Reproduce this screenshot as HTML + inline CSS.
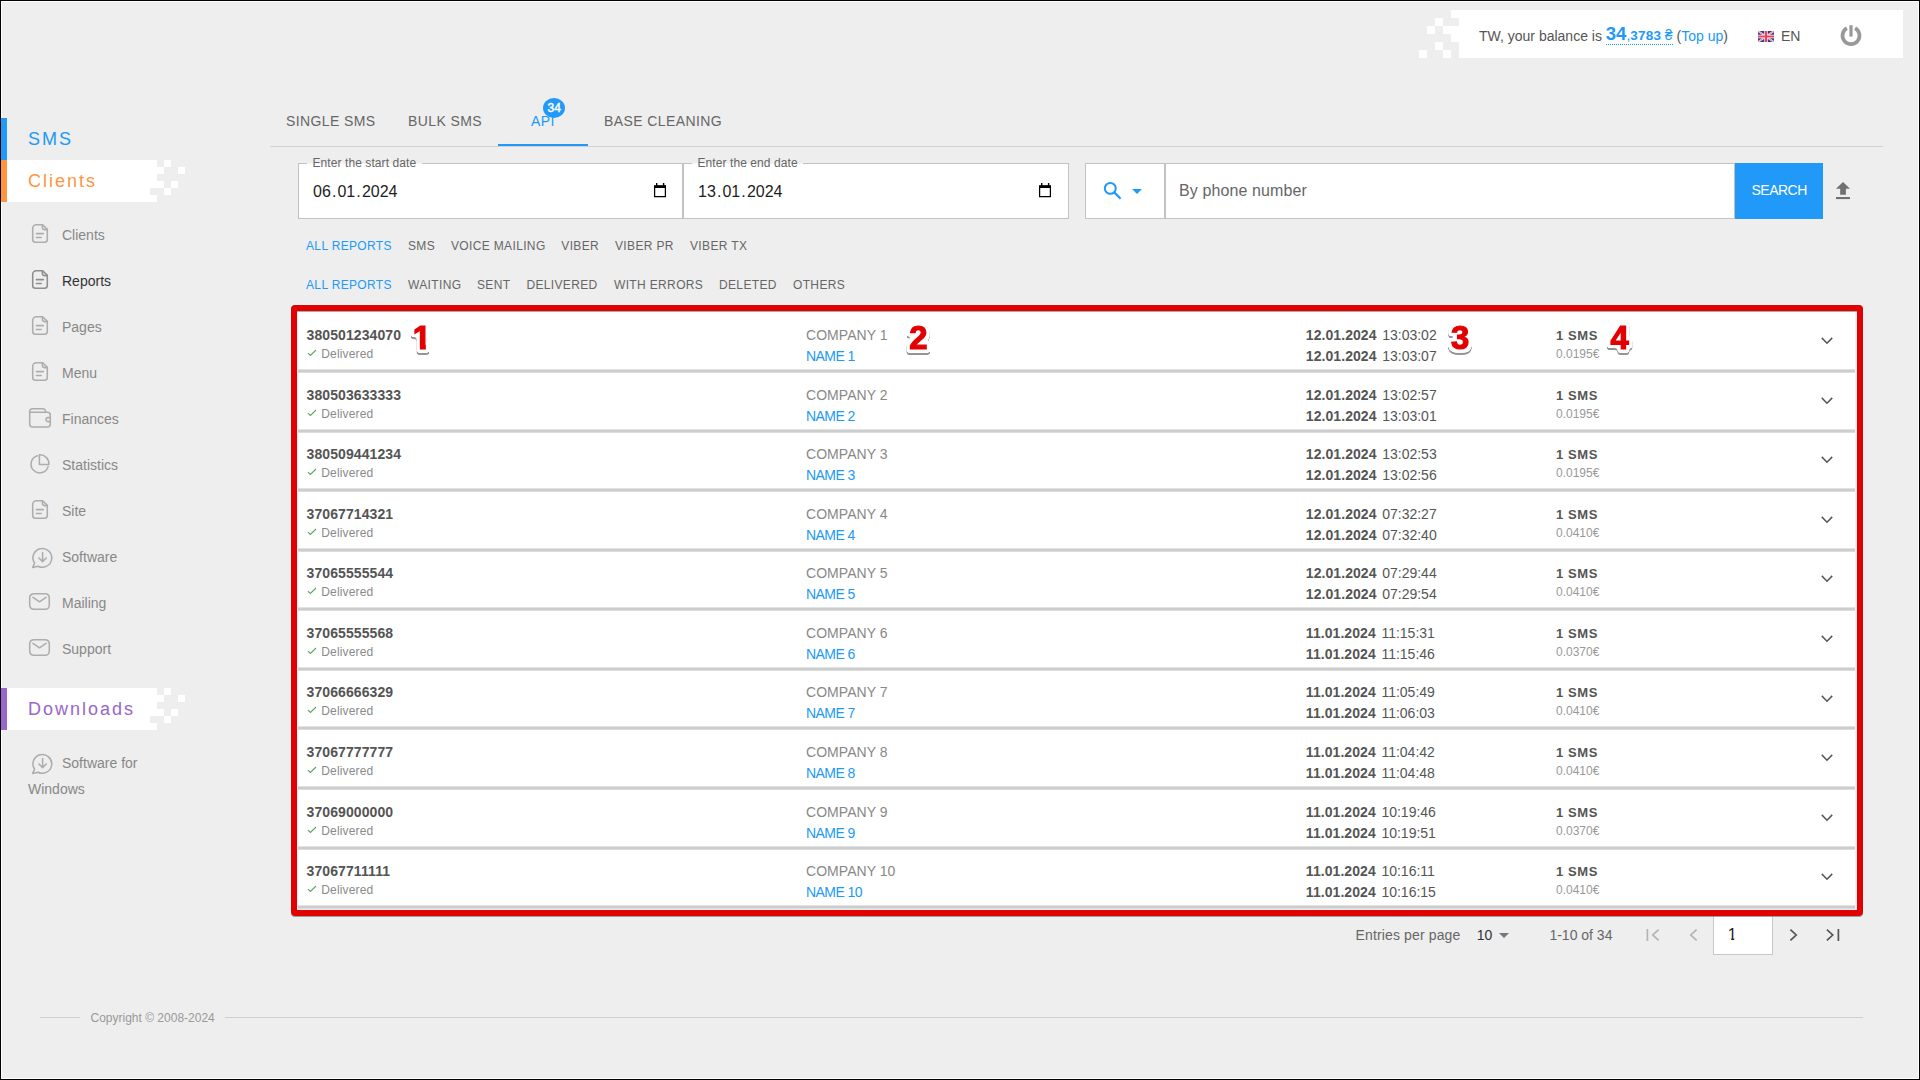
<!DOCTYPE html>
<html lang="en"><head><meta charset="utf-8"><title>Reports</title>
<style>
html,body{margin:0;padding:0}
body{width:1920px;height:1080px;overflow:hidden;position:relative;background:#eeeeee;font-family:"Liberation Sans",sans-serif;color:#666}
.t{position:absolute;white-space:nowrap;line-height:1}
.b{font-weight:bold}
.abs{position:absolute}
.w{position:absolute;background:#fff}
.g{position:absolute;background:#eeeeee}
svg{position:absolute;overflow:visible}
.frame{position:absolute;left:0;top:0;width:1918px;height:1078px;border:1px solid #000;box-shadow:inset 0 0 0 1px #fff;pointer-events:none}
.row{position:absolute;left:298px;width:1557px;background:#fff}
.sep{position:absolute;left:298px;width:1557px;height:4px;background:linear-gradient(#e2e2e2 0 25%,#cdcdcd 25% 75%,#dcdcdc 75%)}
.numw{position:absolute;filter:url(#ol)}
.num{display:block;white-space:nowrap;line-height:1;font-weight:bold;font-size:32.8px;color:#e30000;-webkit-text-stroke:1.2px #e30000}
.one{clip-path:polygon(-4px -4px,26px -4px,26px 23.4px,13.0px 23.4px,13.0px 32px,7.1px 32px,7.1px 23.4px,-4px 23.4px)}
</style></head><body>
<div class="frame"></div>

<div class="w" style="left:1459px;top:10px;width:444px;height:48px"></div>
<div class="w" style="left:1451px;top:10px;width:8px;height:8px"></div>
<div class="w" style="left:1435px;top:18px;width:8px;height:8px"></div>
<div class="w" style="left:1427px;top:26px;width:8px;height:8px"></div>
<div class="w" style="left:1443px;top:26px;width:8px;height:8px"></div>
<div class="w" style="left:1419px;top:50px;width:8px;height:8px"></div>
<div class="w" style="left:1443px;top:50px;width:8px;height:8px"></div>
<div class="w" style="left:1435px;top:42px;width:8px;height:8px"></div>
<div class="w" style="left:1451px;top:10px;width:8px;height:8px"></div>
<div class="w" style="left:1451px;top:26px;width:8px;height:8px"></div>
<div class="w" style="left:1451px;top:34px;width:8px;height:8px"></div>
<span class="t" style="left:1479px;top:28.15px;font-size:14px;color:#555;line-height:14px">TW, your balance is <span style="display:inline-block;position:relative;top:-1.5px;line-height:0;border-bottom:1px dotted #2099f8;padding-bottom:1.5px;margin-bottom:-1px;color:#2099f8"><b style="font-size:18.5px;line-height:14px">34</b><span style="font-size:14px;line-height:14px">,</span><b style="font-size:13.5px;line-height:14px;letter-spacing:.2px">3783</b><span style="font-size:14px;line-height:14px;margin-left:-.2px"> ₴</span></span> (<span style="color:#2099f8">Top up</span>)</span>
<svg style="left:1758px;top:31.4px;overflow:hidden" width="16" height="11" viewBox="0 0 60 40" preserveAspectRatio="none"><rect width="60" height="40" fill="#2e3f92"/><path d="M0 0L60 40M60 0L0 40" stroke="#fff" stroke-width="6.5"/><path d="M0 0L60 40M60 0L0 40" stroke="#ee4058" stroke-width="2.4"/><path d="M30 0V40M0 20H60" stroke="#fff" stroke-width="13"/><path d="M30 0V40M0 20H60" stroke="#ee4058" stroke-width="8"/></svg>
<span class="t" style="left:1781px;top:29.15px;font-size:14px;color:#555;">EN</span>
<svg style="left:1840px;top:24px" width="22" height="23" viewBox="0 0 22 23"><path d="M6.9 4.2A8.5 8.5 0 1 0 15.1 4.2" fill="none" stroke="#999" stroke-width="3.7" stroke-linecap="butt"/><path d="M11 1.2V12.6" stroke="#999" stroke-width="3.2" fill="none"/></svg>
<div class="abs" style="left:1px;top:118px;width:6px;height:42px;background:#2099f8"></div>
<span class="t" style="left:28px;top:129.76px;font-size:18px;color:#2099f8;letter-spacing:2px">SMS</span>
<div class="w" style="left:7px;top:160px;width:150px;height:42px"></div>
<div class="abs" style="left:1px;top:160px;width:6px;height:42px;background:#ff9540"></div>
<div class="w" style="left:164px;top:160px;width:7px;height:7px"></div>
<div class="w" style="left:157px;top:167px;width:7px;height:7px"></div>
<div class="w" style="left:178px;top:167px;width:7px;height:7px"></div>
<div class="w" style="left:157px;top:181px;width:7px;height:7px"></div>
<div class="w" style="left:171px;top:181px;width:7px;height:7px"></div>
<div class="w" style="left:164px;top:188px;width:7px;height:7px"></div>
<div class="g" style="left:150px;top:188px;width:7px;height:7px"></div>
<span class="t" style="left:28px;top:171.76px;font-size:18px;color:#ff9540;letter-spacing:2px">Clients</span>
<div class="w" style="left:7px;top:688px;width:150px;height:42px"></div>
<div class="abs" style="left:1px;top:688px;width:6px;height:42px;background:#9966cc"></div>
<div class="w" style="left:164px;top:688px;width:7px;height:7px"></div>
<div class="w" style="left:157px;top:695px;width:7px;height:7px"></div>
<div class="w" style="left:178px;top:695px;width:7px;height:7px"></div>
<div class="w" style="left:157px;top:709px;width:7px;height:7px"></div>
<div class="w" style="left:171px;top:709px;width:7px;height:7px"></div>
<div class="w" style="left:164px;top:716px;width:7px;height:7px"></div>
<div class="g" style="left:150px;top:716px;width:7px;height:7px"></div>
<span class="t" style="left:28px;top:699.76px;font-size:18px;color:#9966cc;letter-spacing:2px">Downloads</span>
<svg style="left:32px;top:223.7px" width="16" height="19" viewBox="0 0 16 19" fill="none" stroke="#adadad" stroke-width="1.55" stroke-linejoin="round" stroke-linecap="round"><path d="M4.2 .7H10.6L15.3 5.4V15.5A2.8 2.8 0 0 1 12.5 18.3H3.5A2.8 2.8 0 0 1 .7 15.5V4.2A3.5 3.5 0 0 1 4.2 .7Z"/><path d="M10.4 .9V3.6A2 2 0 0 0 12.4 5.6H15.1"/><path d="M4.4 9.6H11.4M4.4 13.4H9.2"/></svg>
<span class="t" style="left:62px;top:228.15px;font-size:14px;color:#888;">Clients</span>
<svg style="left:32px;top:269.7px" width="16" height="19" viewBox="0 0 16 19" fill="none" stroke="#8e8e8e" stroke-width="1.55" stroke-linejoin="round" stroke-linecap="round"><path d="M4.2 .7H10.6L15.3 5.4V15.5A2.8 2.8 0 0 1 12.5 18.3H3.5A2.8 2.8 0 0 1 .7 15.5V4.2A3.5 3.5 0 0 1 4.2 .7Z"/><path d="M10.4 .9V3.6A2 2 0 0 0 12.4 5.6H15.1"/><path d="M4.4 9.6H11.4M4.4 13.4H9.2"/></svg>
<span class="t" style="left:62px;top:274.15px;font-size:14px;color:#333;">Reports</span>
<svg style="left:32px;top:315.7px" width="16" height="19" viewBox="0 0 16 19" fill="none" stroke="#adadad" stroke-width="1.55" stroke-linejoin="round" stroke-linecap="round"><path d="M4.2 .7H10.6L15.3 5.4V15.5A2.8 2.8 0 0 1 12.5 18.3H3.5A2.8 2.8 0 0 1 .7 15.5V4.2A3.5 3.5 0 0 1 4.2 .7Z"/><path d="M10.4 .9V3.6A2 2 0 0 0 12.4 5.6H15.1"/><path d="M4.4 9.6H11.4M4.4 13.4H9.2"/></svg>
<span class="t" style="left:62px;top:320.15px;font-size:14px;color:#888;">Pages</span>
<svg style="left:32px;top:361.7px" width="16" height="19" viewBox="0 0 16 19" fill="none" stroke="#adadad" stroke-width="1.55" stroke-linejoin="round" stroke-linecap="round"><path d="M4.2 .7H10.6L15.3 5.4V15.5A2.8 2.8 0 0 1 12.5 18.3H3.5A2.8 2.8 0 0 1 .7 15.5V4.2A3.5 3.5 0 0 1 4.2 .7Z"/><path d="M10.4 .9V3.6A2 2 0 0 0 12.4 5.6H15.1"/><path d="M4.4 9.6H11.4M4.4 13.4H9.2"/></svg>
<span class="t" style="left:62px;top:366.15px;font-size:14px;color:#888;">Menu</span>
<svg style="left:28.7px;top:408px" width="22" height="20" viewBox="0 0 22 20" fill="none" stroke="#adadad" stroke-width="1.55" stroke-linejoin="round" stroke-linecap="round"><path d="M.7 4.2V16A3 3 0 0 0 3.7 19H18.3A3 3 0 0 0 21.3 16V7.2A3 3 0 0 0 18.3 4.2H.7"/><path d="M.7 4.2V3.2A2.5 2.5 0 0 1 3.2 .7H14A2.5 2.5 0 0 1 16.5 3.2V4.2"/><path d="M21.3 9.6H19A2 2 0 0 0 19 13.6H21.3"/></svg>
<span class="t" style="left:62px;top:412.15px;font-size:14px;color:#888;">Finances</span>
<svg style="left:30px;top:453.8px" width="20" height="21" viewBox="0 0 20 21" fill="none" stroke="#adadad" stroke-width="1.55" stroke-linejoin="round" stroke-linecap="round"><path d="M9.4 1.2V10.4H18.6"/><path d="M7.4 1.8A8.7 8.7 0 1 0 18.1 12.6"/><path d="M9.4 .8A9 9 0 0 1 18.9 10.2"/></svg>
<span class="t" style="left:62px;top:458.15px;font-size:14px;color:#888;">Statistics</span>
<svg style="left:32px;top:499.7px" width="16" height="19" viewBox="0 0 16 19" fill="none" stroke="#adadad" stroke-width="1.55" stroke-linejoin="round" stroke-linecap="round"><path d="M4.2 .7H10.6L15.3 5.4V15.5A2.8 2.8 0 0 1 12.5 18.3H3.5A2.8 2.8 0 0 1 .7 15.5V4.2A3.5 3.5 0 0 1 4.2 .7Z"/><path d="M10.4 .9V3.6A2 2 0 0 0 12.4 5.6H15.1"/><path d="M4.4 9.6H11.4M4.4 13.4H9.2"/></svg>
<span class="t" style="left:62px;top:504.15px;font-size:14px;color:#888;">Site</span>
<svg style="left:31.5px;top:547px" width="21" height="21" viewBox="0 0 21 21" fill="none" stroke="#adadad" stroke-width="1.55" stroke-linejoin="round" stroke-linecap="round"><path d="M2.6 16.2A9.4 9.4 0 1 1 6 19.2L.7 20.4Z"/><path d="M10.6 5.5V14.5M6.9 11L10.6 14.6L14.3 11"/></svg>
<span class="t" style="left:62px;top:550.15px;font-size:14px;color:#888;">Software</span>
<svg style="left:29.0px;top:592.9px" width="21" height="17" viewBox="0 0 21 17" fill="none" stroke="#adadad" stroke-width="1.55" stroke-linejoin="round" stroke-linecap="round"><path d="M4.7 .7H16.3A4 4 0 0 1 20.3 4.7V12.3A4 4 0 0 1 16.3 16.3H4.7A4 4 0 0 1 .7 12.3V4.7A4 4 0 0 1 4.7 .7Z"/><path d="M4 4.3L10.5 8.8L17 4.3"/></svg>
<span class="t" style="left:62px;top:596.15px;font-size:14px;color:#888;">Mailing</span>
<svg style="left:29.0px;top:638.9px" width="21" height="17" viewBox="0 0 21 17" fill="none" stroke="#adadad" stroke-width="1.55" stroke-linejoin="round" stroke-linecap="round"><path d="M4.7 .7H16.3A4 4 0 0 1 20.3 4.7V12.3A4 4 0 0 1 16.3 16.3H4.7A4 4 0 0 1 .7 12.3V4.7A4 4 0 0 1 4.7 .7Z"/><path d="M4 4.3L10.5 8.8L17 4.3"/></svg>
<span class="t" style="left:62px;top:642.15px;font-size:14px;color:#888;">Support</span>
<svg style="left:31.5px;top:752.6px" width="21" height="21" viewBox="0 0 21 21" fill="none" stroke="#adadad" stroke-width="1.55" stroke-linejoin="round" stroke-linecap="round"><path d="M2.6 16.2A9.4 9.4 0 1 1 6 19.2L.7 20.4Z"/><path d="M10.6 5.5V14.5M6.9 11L10.6 14.6L14.3 11"/></svg>
<span class="t" style="left:62px;top:756.15px;font-size:14px;color:#888;">Software for</span>
<span class="t" style="left:28px;top:782.15px;font-size:14px;color:#888;">Windows</span>
<div class="abs" style="left:270px;top:146px;width:1613px;height:1px;background:#d2d2d2"></div>
<div class="abs" style="left:498px;top:144px;width:90px;height:2px;background:#2099f8"></div>
<span class="t" style="left:286px;top:114.15px;font-size:14px;color:#666;letter-spacing:.4px">SINGLE SMS</span>
<span class="t" style="left:408px;top:114.15px;font-size:14px;color:#666;letter-spacing:.4px">BULK SMS</span>
<span class="t" style="left:531px;top:114.15px;font-size:14px;color:#2099f8;letter-spacing:.4px">API</span>
<span class="t" style="left:604px;top:114.15px;font-size:14px;color:#666;letter-spacing:.4px">BASE CLEANING</span>
<div class="abs" style="left:543px;top:97.7px;width:22.4px;height:20.4px;border-radius:11.2px/10.2px;background:#2099f8;color:#fff;font-size:12px;-webkit-text-stroke:.45px #fff;text-align:center;line-height:20.4px">34</div>
<div class="w" style="left:298px;top:163px;width:383px;height:54px;border:1px solid #c2c2c2"></div>
<div class="abs" style="left:307px;top:163px;width:115px;height:1px;background:linear-gradient(#f6f6f6,#f6f6f6)"></div>
<span class="t" style="left:312.5px;top:157.34px;font-size:12px;color:#666;letter-spacing:.08px">Enter the start date</span>
<span class="t" style="left:313px;top:184.26px;font-size:16px;color:#1d1d1d;">06<span style="margin:0 1.1px">.</span>01<span style="margin:0 1.1px">.</span>2024</span>
<svg style="left:652.5px;top:183px" width="13" height="14" viewBox="0 0 13 14"><path d="M1.6 3.2H12.4V13.7H1.6Z" fill="none" stroke="#000" stroke-width="1.25" stroke-linejoin="round"/><path d="M1 2.3H13V5H1Z" fill="#000"/><path d="M3.7 .1V3M10.6 .1V3" stroke="#000" stroke-width="1.4"/></svg>
<div class="w" style="left:683px;top:163px;width:384px;height:54px;border:1px solid #c2c2c2"></div>
<div class="abs" style="left:692px;top:163px;width:111px;height:1px;background:linear-gradient(#f6f6f6,#f6f6f6)"></div>
<span class="t" style="left:697.5px;top:157.34px;font-size:12px;color:#666;letter-spacing:.08px">Enter the end date</span>
<span class="t" style="left:698px;top:184.26px;font-size:16px;color:#1d1d1d;">13<span style="margin:0 1.1px">.</span>01<span style="margin:0 1.1px">.</span>2024</span>
<svg style="left:1037.5px;top:183px" width="13" height="14" viewBox="0 0 13 14"><path d="M1.6 3.2H12.4V13.7H1.6Z" fill="none" stroke="#000" stroke-width="1.25" stroke-linejoin="round"/><path d="M1 2.3H13V5H1Z" fill="#000"/><path d="M3.7 .1V3M10.6 .1V3" stroke="#000" stroke-width="1.4"/></svg>
<div class="w" style="left:1085px;top:163px;width:78px;height:54px;border:1px solid #c2c2c2"></div>
<div class="w" style="left:1165px;top:163px;width:568px;height:54px;border:1px solid #c2c2c2"></div>
<svg style="left:1102px;top:180px" width="22" height="22" viewBox="0 0 22 22"><circle cx="8.3" cy="8.4" r="5.45" fill="none" stroke="#2099f8" stroke-width="2"/><path d="M12.3 12.4L18.6 18.7" stroke="#2099f8" stroke-width="2.2" fill="none"/></svg>
<svg style="left:1131.5px;top:189px" width="10" height="5" viewBox="0 0 10 5"><path d="M0 0H10L5 5Z" fill="#2099f8"/></svg>
<span class="t" style="left:1179px;top:182.96px;font-size:16px;color:#666;letter-spacing:.1px">By phone number</span>
<div class="abs" style="left:1735px;top:163px;width:88px;height:56px;background:#2099f8"></div>
<span class="t" style="left:1751.5px;top:183.15px;font-size:14px;color:#fff;letter-spacing:-.5px">SEARCH</span>
<svg style="left:1836px;top:182px" width="14" height="17" viewBox="0 0 14 17"><path d="M7 -.1L14 6.8H9.9V12.8H4.2V6.8H0Z" fill="#707070"/><path d="M0 15H14V17.1H0Z" fill="#707070"/></svg>
<span class="t" style="left:306px;top:239.84px;font-size:12px;color:#2099f8;letter-spacing:.35px">ALL REPORTS</span>
<span class="t" style="left:408px;top:239.84px;font-size:12px;color:#666;letter-spacing:.35px">SMS</span>
<span class="t" style="left:451px;top:239.84px;font-size:12px;color:#666;letter-spacing:.35px">VOICE MAILING</span>
<span class="t" style="left:561.3px;top:239.84px;font-size:12px;color:#666;letter-spacing:.35px">VIBER</span>
<span class="t" style="left:615px;top:239.84px;font-size:12px;color:#666;letter-spacing:.35px">VIBER PR</span>
<span class="t" style="left:690px;top:239.84px;font-size:12px;color:#666;letter-spacing:.35px">VIBER TX</span>
<span class="t" style="left:306px;top:278.84px;font-size:12px;color:#2099f8;letter-spacing:.35px">ALL REPORTS</span>
<span class="t" style="left:408px;top:278.84px;font-size:12px;color:#666;letter-spacing:.35px">WAITING</span>
<span class="t" style="left:477px;top:278.84px;font-size:12px;color:#666;letter-spacing:.35px">SENT</span>
<span class="t" style="left:526.4px;top:278.84px;font-size:12px;color:#666;letter-spacing:.35px">DELIVERED</span>
<span class="t" style="left:614px;top:278.84px;font-size:12px;color:#666;letter-spacing:.35px">WITH ERRORS</span>
<span class="t" style="left:719px;top:278.84px;font-size:12px;color:#666;letter-spacing:.35px">DELETED</span>
<span class="t" style="left:793px;top:278.84px;font-size:12px;color:#666;letter-spacing:.35px">OTHERS</span>
<div class="w" style="left:297px;top:311px;width:1560px;height:599px;background:#f4f4f4"></div>
<div class="row" style="top:311px;height:58px"></div><div class="sep" style="top:369px"></div>
<span class="t b" style="left:306.5px;top:327.75px;font-size:14px;color:#545454;letter-spacing:.1px">380501234070</span>
<svg style="left:307px;top:348.5px" width="11" height="8" viewBox="0 0 11 8"><path d="M.9 4.1L3.4 6.5L9 1" fill="none" stroke="#5aa660" stroke-width="1.1"/></svg>
<span class="t" style="left:321.3px;top:347.64px;font-size:12px;color:#8a8a8a;letter-spacing:.15px">Delivered</span>
<span class="t" style="left:806px;top:327.95px;font-size:14px;color:#888;letter-spacing:.05px">COMPANY 1</span>
<span class="t" style="left:806px;top:349.15px;font-size:14px;color:#2099f8;letter-spacing:-.55px">NAME 1</span>
<span class="t" style="left:1305.8px;top:327.75px;font-size:14px;color:#555;"><b style="letter-spacing:.07px">12.01.2024</b><span style="margin-left:5.6px">13:03:02</span></span>
<span class="t" style="left:1305.8px;top:348.55px;font-size:14px;color:#555;"><b style="letter-spacing:.07px">12.01.2024</b><span style="margin-left:5.6px">13:03:07</span></span>
<span class="t b" style="left:1556px;top:328.60px;font-size:13px;color:#555;letter-spacing:.6px">1 SMS</span>
<span class="t" style="left:1556px;top:347.64px;font-size:12px;color:#999;">0.0195€</span>
<svg style="left:1821px;top:337.35px" width="12" height="8" viewBox="0 0 12 8"><path d="M.8 .9L6 6.2L11.2 .9" fill="none" stroke="#555" stroke-width="1.5"/></svg>
<div class="row" style="top:373px;height:56px"></div><div class="sep" style="top:429px"></div>
<span class="t b" style="left:306.5px;top:387.75px;font-size:14px;color:#545454;letter-spacing:.1px">380503633333</span>
<svg style="left:307px;top:408.5px" width="11" height="8" viewBox="0 0 11 8"><path d="M.9 4.1L3.4 6.5L9 1" fill="none" stroke="#5aa660" stroke-width="1.1"/></svg>
<span class="t" style="left:321.3px;top:407.64px;font-size:12px;color:#8a8a8a;letter-spacing:.15px">Delivered</span>
<span class="t" style="left:806px;top:387.95px;font-size:14px;color:#888;letter-spacing:.05px">COMPANY 2</span>
<span class="t" style="left:806px;top:409.15px;font-size:14px;color:#2099f8;letter-spacing:-.55px">NAME 2</span>
<span class="t" style="left:1305.8px;top:387.75px;font-size:14px;color:#555;"><b style="letter-spacing:.07px">12.01.2024</b><span style="margin-left:5.6px">13:02:57</span></span>
<span class="t" style="left:1305.8px;top:408.55px;font-size:14px;color:#555;"><b style="letter-spacing:.07px">12.01.2024</b><span style="margin-left:5.6px">13:03:01</span></span>
<span class="t b" style="left:1556px;top:388.60px;font-size:13px;color:#555;letter-spacing:.6px">1 SMS</span>
<span class="t" style="left:1556px;top:407.64px;font-size:12px;color:#999;">0.0195€</span>
<svg style="left:1821px;top:396.88px" width="12" height="8" viewBox="0 0 12 8"><path d="M.8 .9L6 6.2L11.2 .9" fill="none" stroke="#555" stroke-width="1.5"/></svg>
<div class="row" style="top:433px;height:55px"></div><div class="sep" style="top:488px"></div>
<span class="t b" style="left:306.5px;top:446.75px;font-size:14px;color:#545454;letter-spacing:.1px">380509441234</span>
<svg style="left:307px;top:467.5px" width="11" height="8" viewBox="0 0 11 8"><path d="M.9 4.1L3.4 6.5L9 1" fill="none" stroke="#5aa660" stroke-width="1.1"/></svg>
<span class="t" style="left:321.3px;top:466.64px;font-size:12px;color:#8a8a8a;letter-spacing:.15px">Delivered</span>
<span class="t" style="left:806px;top:446.95px;font-size:14px;color:#888;letter-spacing:.05px">COMPANY 3</span>
<span class="t" style="left:806px;top:468.15px;font-size:14px;color:#2099f8;letter-spacing:-.55px">NAME 3</span>
<span class="t" style="left:1305.8px;top:446.75px;font-size:14px;color:#555;"><b style="letter-spacing:.07px">12.01.2024</b><span style="margin-left:5.6px">13:02:53</span></span>
<span class="t" style="left:1305.8px;top:467.55px;font-size:14px;color:#555;"><b style="letter-spacing:.07px">12.01.2024</b><span style="margin-left:5.6px">13:02:56</span></span>
<span class="t b" style="left:1556px;top:447.60px;font-size:13px;color:#555;letter-spacing:.6px">1 SMS</span>
<span class="t" style="left:1556px;top:466.64px;font-size:12px;color:#999;">0.0195€</span>
<svg style="left:1821px;top:456.41px" width="12" height="8" viewBox="0 0 12 8"><path d="M.8 .9L6 6.2L11.2 .9" fill="none" stroke="#555" stroke-width="1.5"/></svg>
<div class="row" style="top:492px;height:56px"></div><div class="sep" style="top:548px"></div>
<span class="t b" style="left:306.5px;top:506.75px;font-size:14px;color:#545454;letter-spacing:.1px">37067714321</span>
<svg style="left:307px;top:527.5px" width="11" height="8" viewBox="0 0 11 8"><path d="M.9 4.1L3.4 6.5L9 1" fill="none" stroke="#5aa660" stroke-width="1.1"/></svg>
<span class="t" style="left:321.3px;top:526.64px;font-size:12px;color:#8a8a8a;letter-spacing:.15px">Delivered</span>
<span class="t" style="left:806px;top:506.95px;font-size:14px;color:#888;letter-spacing:.05px">COMPANY 4</span>
<span class="t" style="left:806px;top:528.15px;font-size:14px;color:#2099f8;letter-spacing:-.55px">NAME 4</span>
<span class="t" style="left:1305.8px;top:506.75px;font-size:14px;color:#555;"><b style="letter-spacing:.07px">12.01.2024</b><span style="margin-left:5.6px">07:32:27</span></span>
<span class="t" style="left:1305.8px;top:527.55px;font-size:14px;color:#555;"><b style="letter-spacing:.07px">12.01.2024</b><span style="margin-left:5.6px">07:32:40</span></span>
<span class="t b" style="left:1556px;top:507.60px;font-size:13px;color:#555;letter-spacing:.6px">1 SMS</span>
<span class="t" style="left:1556px;top:526.64px;font-size:12px;color:#999;">0.0410€</span>
<svg style="left:1821px;top:515.94px" width="12" height="8" viewBox="0 0 12 8"><path d="M.8 .9L6 6.2L11.2 .9" fill="none" stroke="#555" stroke-width="1.5"/></svg>
<div class="row" style="top:552px;height:55px"></div><div class="sep" style="top:607px"></div>
<span class="t b" style="left:306.5px;top:565.75px;font-size:14px;color:#545454;letter-spacing:.1px">37065555544</span>
<svg style="left:307px;top:586.5px" width="11" height="8" viewBox="0 0 11 8"><path d="M.9 4.1L3.4 6.5L9 1" fill="none" stroke="#5aa660" stroke-width="1.1"/></svg>
<span class="t" style="left:321.3px;top:585.64px;font-size:12px;color:#8a8a8a;letter-spacing:.15px">Delivered</span>
<span class="t" style="left:806px;top:565.95px;font-size:14px;color:#888;letter-spacing:.05px">COMPANY 5</span>
<span class="t" style="left:806px;top:587.15px;font-size:14px;color:#2099f8;letter-spacing:-.55px">NAME 5</span>
<span class="t" style="left:1305.8px;top:565.75px;font-size:14px;color:#555;"><b style="letter-spacing:.07px">12.01.2024</b><span style="margin-left:5.6px">07:29:44</span></span>
<span class="t" style="left:1305.8px;top:586.55px;font-size:14px;color:#555;"><b style="letter-spacing:.07px">12.01.2024</b><span style="margin-left:5.6px">07:29:54</span></span>
<span class="t b" style="left:1556px;top:566.60px;font-size:13px;color:#555;letter-spacing:.6px">1 SMS</span>
<span class="t" style="left:1556px;top:585.64px;font-size:12px;color:#999;">0.0410€</span>
<svg style="left:1821px;top:575.47px" width="12" height="8" viewBox="0 0 12 8"><path d="M.8 .9L6 6.2L11.2 .9" fill="none" stroke="#555" stroke-width="1.5"/></svg>
<div class="row" style="top:611px;height:56px"></div><div class="sep" style="top:667px"></div>
<span class="t b" style="left:306.5px;top:625.75px;font-size:14px;color:#545454;letter-spacing:.1px">37065555568</span>
<svg style="left:307px;top:646.5px" width="11" height="8" viewBox="0 0 11 8"><path d="M.9 4.1L3.4 6.5L9 1" fill="none" stroke="#5aa660" stroke-width="1.1"/></svg>
<span class="t" style="left:321.3px;top:645.64px;font-size:12px;color:#8a8a8a;letter-spacing:.15px">Delivered</span>
<span class="t" style="left:806px;top:625.95px;font-size:14px;color:#888;letter-spacing:.05px">COMPANY 6</span>
<span class="t" style="left:806px;top:647.15px;font-size:14px;color:#2099f8;letter-spacing:-.55px">NAME 6</span>
<span class="t" style="left:1305.8px;top:625.75px;font-size:14px;color:#555;"><b style="letter-spacing:.07px">11.01.2024</b><span style="margin-left:5.6px">11:15:31</span></span>
<span class="t" style="left:1305.8px;top:646.55px;font-size:14px;color:#555;"><b style="letter-spacing:.07px">11.01.2024</b><span style="margin-left:5.6px">11:15:46</span></span>
<span class="t b" style="left:1556px;top:626.60px;font-size:13px;color:#555;letter-spacing:.6px">1 SMS</span>
<span class="t" style="left:1556px;top:645.64px;font-size:12px;color:#999;">0.0370€</span>
<svg style="left:1821px;top:635.00px" width="12" height="8" viewBox="0 0 12 8"><path d="M.8 .9L6 6.2L11.2 .9" fill="none" stroke="#555" stroke-width="1.5"/></svg>
<div class="row" style="top:671px;height:55px"></div><div class="sep" style="top:726px"></div>
<span class="t b" style="left:306.5px;top:684.75px;font-size:14px;color:#545454;letter-spacing:.1px">37066666329</span>
<svg style="left:307px;top:705.5px" width="11" height="8" viewBox="0 0 11 8"><path d="M.9 4.1L3.4 6.5L9 1" fill="none" stroke="#5aa660" stroke-width="1.1"/></svg>
<span class="t" style="left:321.3px;top:704.64px;font-size:12px;color:#8a8a8a;letter-spacing:.15px">Delivered</span>
<span class="t" style="left:806px;top:684.95px;font-size:14px;color:#888;letter-spacing:.05px">COMPANY 7</span>
<span class="t" style="left:806px;top:706.15px;font-size:14px;color:#2099f8;letter-spacing:-.55px">NAME 7</span>
<span class="t" style="left:1305.8px;top:684.75px;font-size:14px;color:#555;"><b style="letter-spacing:.07px">11.01.2024</b><span style="margin-left:5.6px">11:05:49</span></span>
<span class="t" style="left:1305.8px;top:705.55px;font-size:14px;color:#555;"><b style="letter-spacing:.07px">11.01.2024</b><span style="margin-left:5.6px">11:06:03</span></span>
<span class="t b" style="left:1556px;top:685.60px;font-size:13px;color:#555;letter-spacing:.6px">1 SMS</span>
<span class="t" style="left:1556px;top:704.64px;font-size:12px;color:#999;">0.0410€</span>
<svg style="left:1821px;top:694.53px" width="12" height="8" viewBox="0 0 12 8"><path d="M.8 .9L6 6.2L11.2 .9" fill="none" stroke="#555" stroke-width="1.5"/></svg>
<div class="row" style="top:730px;height:56px"></div><div class="sep" style="top:786px"></div>
<span class="t b" style="left:306.5px;top:744.75px;font-size:14px;color:#545454;letter-spacing:.1px">37067777777</span>
<svg style="left:307px;top:765.5px" width="11" height="8" viewBox="0 0 11 8"><path d="M.9 4.1L3.4 6.5L9 1" fill="none" stroke="#5aa660" stroke-width="1.1"/></svg>
<span class="t" style="left:321.3px;top:764.64px;font-size:12px;color:#8a8a8a;letter-spacing:.15px">Delivered</span>
<span class="t" style="left:806px;top:744.95px;font-size:14px;color:#888;letter-spacing:.05px">COMPANY 8</span>
<span class="t" style="left:806px;top:766.15px;font-size:14px;color:#2099f8;letter-spacing:-.55px">NAME 8</span>
<span class="t" style="left:1305.8px;top:744.75px;font-size:14px;color:#555;"><b style="letter-spacing:.07px">11.01.2024</b><span style="margin-left:5.6px">11:04:42</span></span>
<span class="t" style="left:1305.8px;top:765.55px;font-size:14px;color:#555;"><b style="letter-spacing:.07px">11.01.2024</b><span style="margin-left:5.6px">11:04:48</span></span>
<span class="t b" style="left:1556px;top:745.60px;font-size:13px;color:#555;letter-spacing:.6px">1 SMS</span>
<span class="t" style="left:1556px;top:764.64px;font-size:12px;color:#999;">0.0410€</span>
<svg style="left:1821px;top:754.06px" width="12" height="8" viewBox="0 0 12 8"><path d="M.8 .9L6 6.2L11.2 .9" fill="none" stroke="#555" stroke-width="1.5"/></svg>
<div class="row" style="top:790px;height:56px"></div><div class="sep" style="top:846px"></div>
<span class="t b" style="left:306.5px;top:804.75px;font-size:14px;color:#545454;letter-spacing:.1px">37069000000</span>
<svg style="left:307px;top:825.5px" width="11" height="8" viewBox="0 0 11 8"><path d="M.9 4.1L3.4 6.5L9 1" fill="none" stroke="#5aa660" stroke-width="1.1"/></svg>
<span class="t" style="left:321.3px;top:824.64px;font-size:12px;color:#8a8a8a;letter-spacing:.15px">Delivered</span>
<span class="t" style="left:806px;top:804.95px;font-size:14px;color:#888;letter-spacing:.05px">COMPANY 9</span>
<span class="t" style="left:806px;top:826.15px;font-size:14px;color:#2099f8;letter-spacing:-.55px">NAME 9</span>
<span class="t" style="left:1305.8px;top:804.75px;font-size:14px;color:#555;"><b style="letter-spacing:.07px">11.01.2024</b><span style="margin-left:5.6px">10:19:46</span></span>
<span class="t" style="left:1305.8px;top:825.55px;font-size:14px;color:#555;"><b style="letter-spacing:.07px">11.01.2024</b><span style="margin-left:5.6px">10:19:51</span></span>
<span class="t b" style="left:1556px;top:805.60px;font-size:13px;color:#555;letter-spacing:.6px">1 SMS</span>
<span class="t" style="left:1556px;top:824.64px;font-size:12px;color:#999;">0.0370€</span>
<svg style="left:1821px;top:813.59px" width="12" height="8" viewBox="0 0 12 8"><path d="M.8 .9L6 6.2L11.2 .9" fill="none" stroke="#555" stroke-width="1.5"/></svg>
<div class="row" style="top:850px;height:55px"></div><div class="sep" style="top:905px"></div>
<span class="t b" style="left:306.5px;top:863.75px;font-size:14px;color:#545454;letter-spacing:.1px">37067711111</span>
<svg style="left:307px;top:884.5px" width="11" height="8" viewBox="0 0 11 8"><path d="M.9 4.1L3.4 6.5L9 1" fill="none" stroke="#5aa660" stroke-width="1.1"/></svg>
<span class="t" style="left:321.3px;top:883.64px;font-size:12px;color:#8a8a8a;letter-spacing:.15px">Delivered</span>
<span class="t" style="left:806px;top:863.95px;font-size:14px;color:#888;letter-spacing:.05px">COMPANY 10</span>
<span class="t" style="left:806px;top:885.15px;font-size:14px;color:#2099f8;letter-spacing:-.55px">NAME 10</span>
<span class="t" style="left:1305.8px;top:863.75px;font-size:14px;color:#555;"><b style="letter-spacing:.07px">11.01.2024</b><span style="margin-left:5.6px">10:16:11</span></span>
<span class="t" style="left:1305.8px;top:884.55px;font-size:14px;color:#555;"><b style="letter-spacing:.07px">11.01.2024</b><span style="margin-left:5.6px">10:16:15</span></span>
<span class="t b" style="left:1556px;top:864.60px;font-size:13px;color:#555;letter-spacing:.6px">1 SMS</span>
<span class="t" style="left:1556px;top:883.64px;font-size:12px;color:#999;">0.0410€</span>
<svg style="left:1821px;top:873.12px" width="12" height="8" viewBox="0 0 12 8"><path d="M.8 .9L6 6.2L11.2 .9" fill="none" stroke="#555" stroke-width="1.5"/></svg>
<div class="w" style="left:1713px;top:912px;width:58px;height:41px;border:1px solid #c8c8c8"></div>
<div class="abs" style="left:290px;top:304px;width:1572px;height:611px;border:1px solid rgba(240,255,255,.6);border-bottom-color:rgba(250,250,250,.5);border-radius:5px"></div>
<div class="abs" style="left:297px;top:311px;width:1558px;height:598px;border:1px solid rgba(225,240,240,.75);border-top:0"></div>
<div class="abs" style="left:291px;top:305px;width:1560px;height:599px;border:6px solid #e30000;border-radius:4px;box-shadow:0 1px 0 rgba(70,95,95,.55),inset 0 1px 0 rgba(70,95,95,.5)"></div>
<svg width="0" height="0" style="position:absolute"><defs><filter id="ol" x="-60%" y="-40%" width="220%" height="180%" color-interpolation-filters="sRGB"><feMorphology in="SourceAlpha" operator="dilate" radius="3" result="d"/><feGaussianBlur in="d" stdDeviation="1.2" result="b"/><feComponentTransfer in="b" result="ring"><feFuncA type="linear" slope="6" intercept="-2"/></feComponentTransfer><feOffset in="ring" dy="1.5" result="so"/><feGaussianBlur in="so" stdDeviation=".55" result="sb"/><feFlood flood-color="#000" flood-opacity=".42"/><feComposite in2="sb" operator="in" result="shadow"/><feFlood flood-color="#fff"/><feComposite in2="ring" operator="in" result="white"/><feMerge><feMergeNode in="shadow"/><feMergeNode in="white"/><feMergeNode in="SourceGraphic"/></feMerge></filter></defs></svg>
<span class="numw" style="left:412.8px;top:321.73px"><span class="num one">1</span></span>
<span class="numw" style="left:909.35px;top:321.73px"><span class="num">2</span></span>
<span class="numw" style="left:1451.0px;top:321.73px"><span class="num">3</span></span>
<span class="numw" style="left:1610.5px;top:321.73px"><span class="num">4</span></span>
<span class="t" style="left:1355.6px;top:928.15px;font-size:14px;color:#666;letter-spacing:.13px">Entries per page</span>
<span class="t" style="left:1476.7px;top:928.15px;font-size:14px;color:#333;">10</span>
<svg style="left:1499px;top:933px" width="10" height="5" viewBox="0 0 10 5"><path d="M0 0H10L5 5Z" fill="#777"/></svg>
<span class="t" style="left:1549.4px;top:928.15px;font-size:14px;color:#666;">1-10 of 34</span>
<span class="t" style="left:1727.8px;top:926.76px;font-size:16px;color:#222;clip-path:polygon(-2px -2px,12px -2px,12px 11.7px,6.4px 11.7px,6.4px 18px,3.4px 18px,3.4px 11.7px,-2px 11.7px)">1</span>
<svg style="left:1646px;top:929px" width="14" height="12" viewBox="0 0 14 12" fill="none" stroke="#b4b4b4" stroke-width="1.7"><path d="M1.4 0V12M12.6 .6L6.8 6L12.6 11.4"/></svg>
<svg style="left:1689px;top:929px" width="14" height="12" viewBox="0 0 14 12" fill="none" stroke="#b4b4b4" stroke-width="1.7"><path d="M7.6 .6L1.8 6L7.6 11.4"/></svg>
<svg style="left:1789px;top:929px" width="14" height="12" viewBox="0 0 14 12" fill="none" stroke="#555" stroke-width="1.7"><path d="M1.4 .6L7.2 6L1.4 11.4"/></svg>
<svg style="left:1826px;top:929px" width="14" height="12" viewBox="0 0 14 12" fill="none" stroke="#555" stroke-width="1.7"><path d="M.9 .6L6.7 6L.9 11.4M12.4 0V12"/></svg>
<div class="abs" style="left:40px;top:1017px;width:40px;height:1px;background:#cfcfcf"></div>
<div class="abs" style="left:225px;top:1017px;width:1638px;height:1px;background:#cfcfcf"></div>
<span class="t" style="left:90.5px;top:1011.84px;font-size:12px;color:#999;">Copyright © 2008-2024</span>
</body></html>
